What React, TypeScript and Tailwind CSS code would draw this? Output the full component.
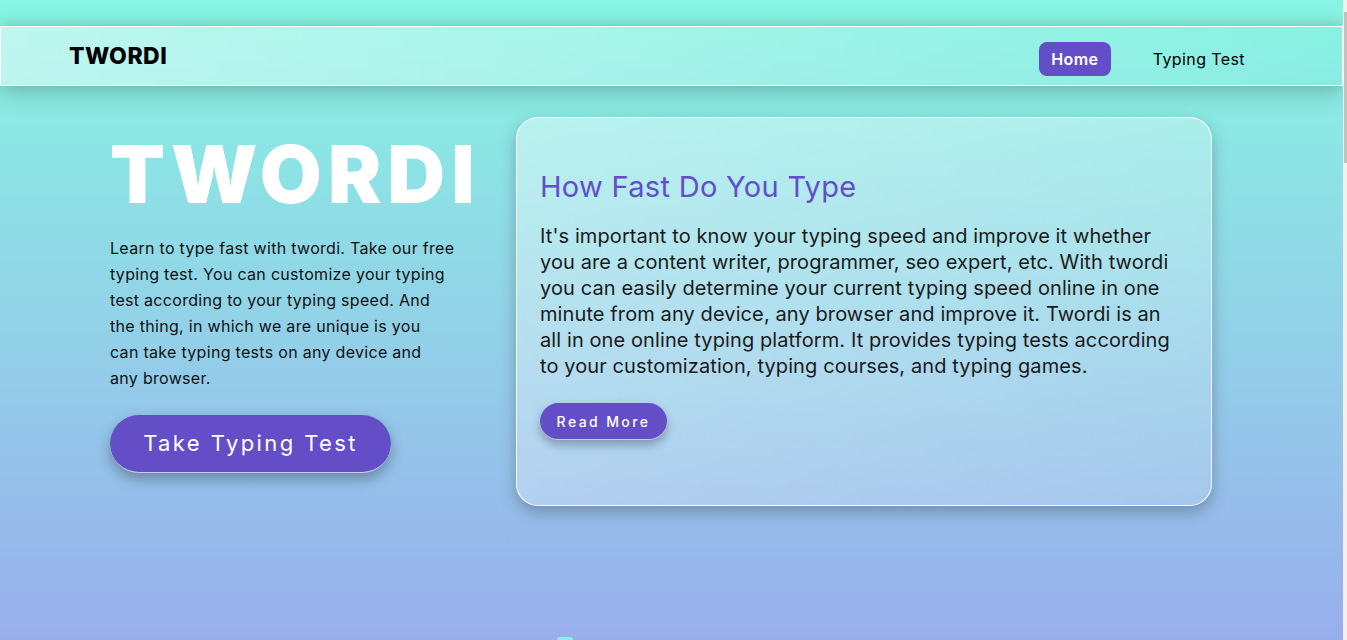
import { useState } from 'react'

const font = { fontFamily: 'Inter, "Noto Sans", sans-serif' }

function NavBar() {
  const [active, setActive] = useState('home')

  return (
    <header className="flex h-[60px] items-center justify-between border border-white bg-gradient-to-r from-white/45 to-white/0 pl-[68px] pr-[97px] shadow-[0_6px_24px_rgba(0,0,0,0.22),0_-2px_10px_rgba(0,0,0,0.08)]">
      <span className="text-[23px] font-extrabold tracking-[0.5px] text-black">TWORDI</span>
      <nav className="flex items-center gap-[42px] pt-[6px] text-[16px] tracking-[0.4px]">
        <button
          onClick={() => setActive('home')}
          className={`${active === 'home' ? 'bg-[#634ec8] font-semibold text-white' : 'text-black'} h-[34px] w-[72px] rounded-lg`}
        >
          Home
        </button>
        <button
          onClick={() => setActive('test')}
          className={`${active === 'test' ? 'rounded-lg bg-[#634ec8] px-3 py-1 font-semibold text-white' : 'text-black'}`}
        >
          Typing Test
        </button>
      </nav>
    </header>
  )
}

function Hero() {
  return (
    <section className="flex items-start gap-[26px] pl-[110px] pt-[31px]">
      <div className="flex w-[380px] flex-col">
        <h1 className="mt-[15px] text-[80px] leading-[1.05] font-black tracking-[6px] text-white">TWORDI</h1>
        <p className="mt-[19px] text-[16px] leading-[26px] tracking-[0.3px] text-[#111]">
          Learn to type fast with twordi. Take our free
          <br />
          typing test. You can customize your typing
          <br />
          test according to your typing speed. And
          <br />
          the thing, in which we are unique is you
          <br />
          can take typing tests on any device and
          <br />
          any browser.
        </p>
        <button className="mt-[24px] h-[58px] w-[281px] rounded-full border-b border-white/70 bg-[#634ec8] text-[22px] tracking-[2.4px] text-white shadow-[0_6px_14px_rgba(0,0,0,0.3)]">
          Take Typing Test
        </button>
      </div>

      <article className="flex h-[389px] w-[696px] flex-col rounded-[22px] border border-white/90 bg-gradient-to-br from-white/40 to-white/15 px-[23px] pt-[52px] shadow-[0_6px_16px_rgba(0,0,0,0.25)]">
        <h2 className="text-[29px] leading-[34px] tracking-[0.3px] text-[#634ec8]">How Fast Do You Type</h2>
        <p className="mt-[19px] text-[20px] leading-[26px] tracking-[0.1px] text-[#1a1a1a]">
          It's important to know your typing speed and improve it whether
          <br />
          you are a content writer, programmer, seo expert, etc. With twordi
          <br />
          you can easily determine your current typing speed online in one
          <br />
          minute from any device, any browser and improve it. Twordi is an
          <br />
          all in one online typing platform. It provides typing tests according
          <br />
          to your customization, typing courses, and typing games.
        </p>
        <button className="mt-[24px] h-[37px] w-[127px] rounded-full border-b border-white/70 bg-[#634ec8] text-[14px] font-medium tracking-[2.4px] text-white shadow-[0_5px_10px_rgba(0,0,0,0.28)]">
          Read More
        </button>
      </article>
    </section>
  )
}

export default function App() {
  return (
    <div className="flex h-[640px] overflow-hidden" style={font}>
      <main className="flex flex-1 flex-col bg-gradient-to-b from-[#86f5e1] to-[#98aeec] pt-[26px]">
        <NavBar />
        <Hero />
        <div className="mt-auto flex pl-[557px]">
          <div className="h-[3px] w-[16px] rounded-t-full bg-[#8ceee6]" />
        </div>
      </main>
      <aside className="flex w-[4px] flex-col bg-[#f1f1f1] pt-[12px]">
        <div className="h-[151px] w-[3px] self-end bg-[#c1c1c1]" />
      </aside>
    </div>
  )
}
